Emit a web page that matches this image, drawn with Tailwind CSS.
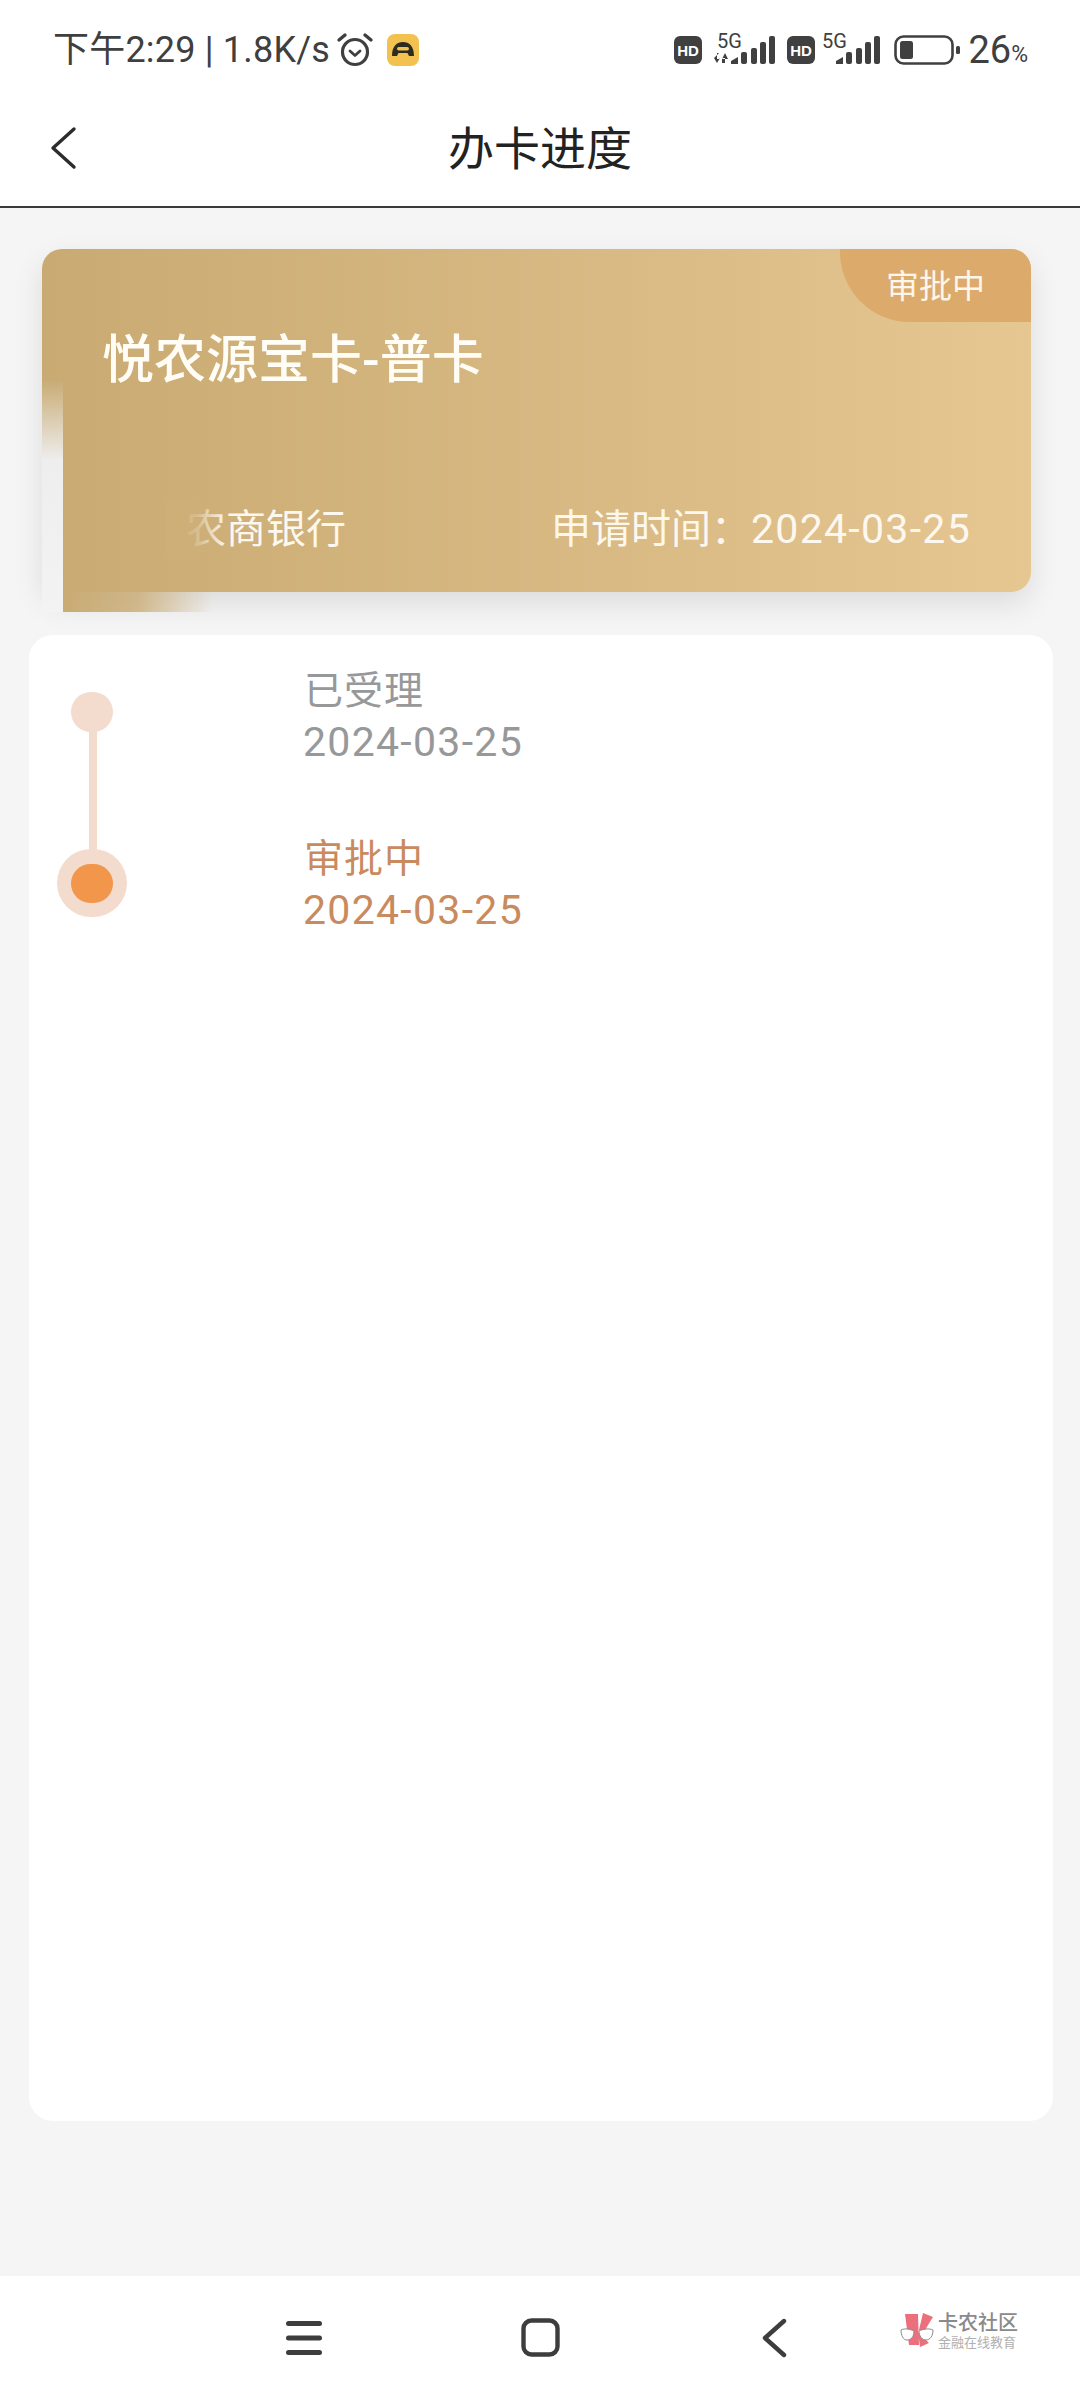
<!DOCTYPE html>
<html lang="zh-CN">
<head>
  <meta charset="UTF-8" />
  <meta name="viewport" content="width=device-width, initial-scale=1.0" />
  <title>办卡进度</title>
  <script src="https://cdn.jsdelivr.net/npm/@tailwindcss/browser@4"></script>
</head>
<body class="bg-white font-['Roboto','Noto_Sans_CJK_SC',sans-serif]">
  <div class="w-[1080px] h-[2400px] flex flex-col overflow-hidden">

    <!-- Status bar -->
    <div class="h-[100px] shrink-0 bg-white flex items-start justify-between pl-[53px] pr-[52px] pt-[30px] text-[#3f3f3f]">
      <div class="flex items-center h-[40px]">
        <span class="text-[36px] leading-[40px] tracking-[0.2px] whitespace-nowrap">下午2:29 | 1.8K/s</span>
        <svg class="ml-[6px]" width="38" height="38" viewBox="0 0 38 38" fill="none" stroke="#3f3f3f">
          <circle cx="19" cy="21" r="12.5" stroke-width="3.2"/>
          <path d="M14 20l5 4.5 5-4.5" stroke-width="2.8" stroke-linecap="round" stroke-linejoin="round"/>
          <path d="M3 9l6-5M35 9l-6-5" stroke-width="3.4" stroke-linecap="round"/>
        </svg>
        <svg class="ml-[13px]" width="32" height="32" viewBox="0 0 32 32">
          <rect width="32" height="32" rx="8" fill="#f2c14f"/>
          <path d="M5 22c0-10 5-14 11-14s11 4 11 14h-5c-1-2-1-3-2-3h-8c-1 0-1 1-2 3z" fill="#2d2a22"/>
          <rect x="10" y="13" width="12" height="3.5" rx="1.7" fill="#f2c14f"/>
        </svg>
      </div>
      <div class="flex items-center h-[40px]">
        <svg width="28" height="28" viewBox="0 0 28 28">
          <rect width="28" height="28" rx="6" fill="#404040"/>
          <text x="14" y="19.5" text-anchor="middle" font-family="Liberation Sans" font-weight="700" font-size="15" fill="#fff">HD</text>
        </svg>
        <svg class="ml-[10px]" width="64" height="42" viewBox="0 0 64 42" fill="#404040">
          <text x="5" y="19" font-family="Roboto" font-size="20">5G</text>
          <path d="M2 29h6v-5h-1v0zM2 29l3 5 3-5zM5 24h3v6H5zM10 30h6l-3-6zM10 29h3v5h-3z"/>
          <path d="M19 32l7-4v7h-7z"/>
          <rect x="29" y="23" width="6" height="12" rx="2"/>
          <rect x="39" y="19" width="6" height="16" rx="2"/>
          <rect x="48" y="13" width="6" height="22" rx="2"/>
          <rect x="57" y="7" width="6" height="28" rx="2"/>
        </svg>
        <svg class="ml-[11px]" width="28" height="28" viewBox="0 0 28 28">
          <rect width="28" height="28" rx="6" fill="#404040"/>
          <text x="14" y="19.5" text-anchor="middle" font-family="Liberation Sans" font-weight="700" font-size="15" fill="#fff">HD</text>
        </svg>
        <svg class="ml-[5px]" width="62" height="42" viewBox="0 0 62 42" fill="#404040">
          <text x="2" y="19" font-family="Roboto" font-size="20">5G</text>
          <path d="M16 32l7-4v7h-7z"/>
          <rect x="26" y="23" width="6" height="12" rx="2"/>
          <rect x="36" y="19" width="6" height="16" rx="2"/>
          <rect x="45" y="13" width="6" height="22" rx="2"/>
          <rect x="54" y="7" width="6" height="28" rx="2"/>
        </svg>
        <svg class="ml-[12px]" width="66" height="30" viewBox="0 0 66 30" fill="none">
          <rect x="1.5" y="1.5" width="57" height="27" rx="8" stroke="#404040" stroke-width="2.6"/>
          <rect x="6" y="6" width="13" height="18" rx="2.5" fill="#404040"/>
          <rect x="62" y="11" width="4" height="8" rx="1.5" fill="#404040"/>
        </svg>
        <span class="ml-[8px] text-[38px] leading-[40px]">26</span>
        <span class="mt-[10px] text-[23px] leading-[28px]">%</span>
      </div>
    </div>

    <!-- Title bar -->
    <div class="relative h-[108px] shrink-0 bg-white border-b-2 border-[#3a3a3a] flex items-center justify-center">
      <svg class="absolute left-[48px] top-[26px]" width="32" height="44" viewBox="0 0 32 44" fill="none" stroke="#2c2c2c" stroke-width="3.4" stroke-linecap="round" stroke-linejoin="round">
        <path d="M26 3L5 22l21 19"/>
      </svg>
      <span class="text-[46px] leading-[56px] text-[#222] mb-[8px]">办卡进度</span>
    </div>

    <!-- Content -->
    <div class="flex-1 bg-[#f5f5f5] pt-[41px] pl-[29px] pr-[27px]">
      <div class="relative ml-[13px] mr-[22px] h-[343px] rounded-[20px] bg-gradient-to-r from-[#c8aa72] to-[#e6c691] shadow-[0_12px_30px_rgba(0,0,0,0.10)] text-white">
        <div class="absolute right-0 top-0 w-[191px] h-[73px] rounded-tr-[20px] rounded-bl-[70px] bg-[#dcab6b] flex items-center justify-center">
          <span class="text-[33px] leading-[40px] pt-[2px] text-[#fdf6ea]">审批中</span>
        </div>

        <div class="flex flex-col h-full pl-[60px] pr-[60px]">
          <div class="mt-[82px] text-[52px] leading-[60px] font-medium text-[#fffdf6] whitespace-nowrap">悦农源宝卡-普卡</div>
          <div class="mt-auto mb-[38px] flex items-center justify-between text-[#fdf8ef] text-[40px] leading-[48px]">
            <span class="pl-[84px]">农商银行</span>
            <span class="whitespace-nowrap">申请时间：<span class="text-[41px] tracking-[1.3px]">2024-03-25</span></span>
          </div>
        </div>

        <!-- smudge over the bank name and the lower left corner -->
        <div class="absolute left-[125px] top-[250px] w-[60px] h-[60px] bg-gradient-to-r from-[#cdaf77] via-[#cdaf77]/80 to-[#cdaf77]/0"></div>
        <div class="absolute left-0 top-[130px] w-[21px] h-[233px] bg-gradient-to-b from-[#eeeeee]/0 via-[#eeeeee] via-[35%] to-[#f3f3f3]"></div>
        <div class="absolute left-[21px] top-[343px] w-[150px] h-[20px] bg-gradient-to-r from-[#c9ab73] via-[#c9ab73]/80 via-[50%] to-[#c9ab73]/0"></div>
      </div>

      <!-- Timeline panel -->
      <div class="mt-[43px] h-[1486px] rounded-[24px] bg-white pt-[31px] relative">
        <div class="absolute left-[60px] top-[90px] w-[8px] h-[130px] bg-[#f3dccd]"></div>
        <div class="absolute left-[42px] top-[57px] w-[42px] h-[40px] rounded-full bg-[#f3dccd]"></div>
        <div class="absolute left-[28px] top-[214px] w-[70px] h-[68px] rounded-full bg-[#f3dccd] flex items-center justify-center">
          <div class="w-[42px] h-[39px] rounded-full bg-[#f2964b]"></div>
        </div>

        <div class="pl-[274px] text-[41px] leading-[51px] text-[#97989a]">
          <div class="text-[39px] tracking-[1px] pl-[1px]">已受理</div>
          <div class="tracking-[1.3px]">2024-03-25</div>
        </div>
        <div class="mt-[66px] pl-[274px] text-[41px] leading-[51px] text-[#c98a5e]">
          <div class="text-[39px] tracking-[1px] pl-[1px]">审批中</div>
          <div class="tracking-[1.3px]">2024-03-25</div>
        </div>
      </div>
    </div>

    <!-- Navigation bar -->
    <div class="relative h-[124px] shrink-0 bg-white flex items-center">
      <svg class="absolute left-[286px] top-[44px]" width="36" height="36" viewBox="0 0 36 36" fill="#3d3d3d">
        <rect y="1" width="36" height="5" rx="2.5"/><rect y="15.5" width="36" height="5" rx="2.5"/><rect y="30" width="36" height="5" rx="2.5"/>
      </svg>
      <svg class="absolute left-[521px] top-[42px]" width="39" height="39" viewBox="0 0 39 39" fill="none">
        <rect x="2.5" y="2.5" width="34" height="34" rx="8" stroke="#3d3d3d" stroke-width="4.4"/>
      </svg>
      <svg class="absolute left-[761px] top-[42px]" width="26" height="40" viewBox="0 0 26 40" fill="none" stroke="#3d3d3d" stroke-width="4.4" stroke-linecap="round" stroke-linejoin="round">
        <path d="M23 3L4 20l19 17"/>
      </svg>
      <div class="absolute left-[900px] top-[36px] flex items-start">
        <svg width="36" height="36" viewBox="0 0 36 36">
          <path d="M5 2l13 0 1 31-10 0zM23 1l10 4-8 13-6 0zM18 20l11 11-9 4z" fill="#ec6f7e"/>
          <path d="M1 18c4-2 9-1 13 1 0 6-3 9-7 9s-6-5-6-10zM19 19c4-2 10-3 14-1 0 6-3 10-7 10s-7-4-7-9z" fill="#fff" stroke="#8a8a8a" stroke-width="1"/>
        </svg>
        <div class="ml-[2px] text-[#8a8a8a] whitespace-nowrap">
          <div class="text-[20px] leading-[23px] font-medium">卡农社区</div>
          <div class="text-[13px] leading-[15px] text-[#b0b0b0]">金融在线教育</div>
        </div>
      </div>
    </div>
  </div>
</body>
</html>
